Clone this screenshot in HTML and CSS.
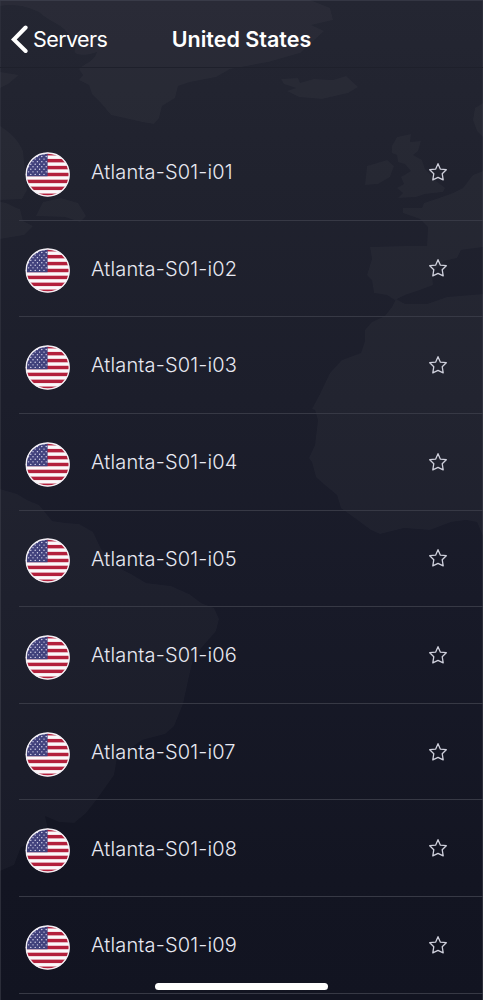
FILE: index.html
```html
<!DOCTYPE html>
<html lang="en">
<head>
<meta charset="utf-8">
<title>United States</title>
<link rel="stylesheet" href="styles.css">
</head>
<body>
<div class="screen">
  <svg class="map" viewBox="0 0 483 1000" aria-hidden="true">
    <!-- Greenland -->
    <path d="M0 6C18 3 29 8 39 12C47 20 56 22 64 29C73 39 77 42 75 49C72 55 83 57 97 52C94 62 83 64 79 69L83 75L79 80L89 85L92 94L101 103L111 115L129 119L142 122L154 124L159 118L162 106L175 98L178 86L190 82L216 77L230 69L268 62L300 53L324 31L311 25L333 20L330 8L320 4L310 0H0Z"/>
    <!-- Iceland -->
    <path d="M281 79L298 78L300 83L314 79L333 80L346 76L358 87L348 93L322 99L299 97L287 91L296 88L284 84Z"/>
    <!-- British Isles -->
    <path d="M365 185L367 166L377 163L387 160L394 166L390 177L378 184Z"/>
    <path d="M392 146L397 137L411 134L410 142L421 141L418 151L413 155L422 160L425 169L432 176L436 181L445 188L443 192L425 194L416 197L398 198L403 193L397 188L404 184L401 177L411 171L405 164L398 162L397 155L392 153Z"/>
    <!-- Europe -->
    <path d="M483 103L475 108L473 120L477 131L483 137Z"/>
    <path d="M483 171L473 175L463 188L453 193L439 198L424 203L422 208L403 208L403 213L420 219L428 227L427 246L404 246L370 247L372 259L367 275L372 280L374 293L387 295L395 300L405 295L420 290L433 285L432 273L444 261L457 258L461 250L483 247Z"/>
    <!-- Africa -->
    <path d="M396 299L405 304L427 304L447 297L483 294V536L477 522L466 520L451 522L430 530L404 528L380 534L371 530L348 513L341 508L337 495L325 485L316 477L312 462L309 458L315 445L318 420L315 410L312 409L320 394L330 373L342 360L361 353L365 341L365 330L372 322L385 316L392 307Z"/>
    <!-- North America -->
    <path d="M0 72L19 75L8 84L0 88Z"/>
    <path d="M0 126C10 133 17 138 23 151L27 190L22 199L0 200Z"/>
    <path d="M36 216L43 202L61 198L78 203L86 216L80 222L65 217Z"/>
    <path d="M0 202C8 202 12 207 20 209L23 221L33 226L24 235L0 239Z"/>
    <!-- South America -->
    <path d="M0 489L17 494L27 500L39 505L52 521L66 523L79 524L93 532L101 549L117 567L131 574L146 583L171 586L189 594L201 603L214 608L219 619L216 631L202 647L193 659L188 681L183 704L174 726L165 734L142 740L117 758L114 775L97 799L86 813L74 823L59 822L45 816L48 829L40 842L21 847L14 865L0 871Z"/>
  </svg>

  <header class="nav">
    <a class="back">
      <svg class="back-icon" viewBox="0 0 18 30" aria-hidden="true"><path d="M14.6 3.5L2.8 15.5L14.6 27"/></svg>
      <span>Servers</span>
    </a>
    <h1 class="title">United States</h1>
  </header>

  <ul class="list" id="servers"></ul>
  <div class="home-bar"></div>
</div>

<svg class="defs" aria-hidden="true">
  <defs>
    <clipPath id="disc"><circle cx="22.7" cy="22.5" r="21.8"/></clipPath>
    <symbol id="flag" viewBox="0 0 45 45">
      <g clip-path="url(#disc)" id="flag-art"></g>
      <circle cx="22.7" cy="22.5" r="21.5" fill="none" stroke="#f3f1f6" stroke-width="1.3"/>
    </symbol>
    <symbol id="star" viewBox="0 0 20 20">
      <path d="M10 1.7L12.4 7.2L18.3 7.7L14.2 11.7L15.2 17.9L10 15.3L4.8 17.9L5.8 11.7L1.7 7.7L7.6 7.2Z" fill="none" stroke="#cfd0dc" stroke-width="1.3" stroke-linejoin="round"/>
    </symbol>
  </defs>
</svg>
<script src="app.js"></script>
</body>
</html>
```
FILE: styles.css
```css
* {
  box-sizing: border-box;
}

body {
  margin: 0;
  background: #171926;
  font-family: Inter, "Liberation Sans", sans-serif;
  color: #fff;
}

.screen {
  position: relative;
  width: 483px;
  height: 1000px;
  overflow: hidden;
  background: linear-gradient(#242632 0%, #20222e 18%, #1c1e2b 40%, #181a28 60%, #131522 88%, #121421 100%);
  box-shadow: inset 0 1px 0 #343643, inset 1px 0 0 #2b2d39, inset -1px 0 0 #2b2d39;
}

.map {
  position: absolute;
  inset: 0;
  width: 483px;
  height: 1000px;
  fill: #fff;
  fill-opacity: 0.028;
}

.nav {
  position: relative;
  display: grid;
  grid-template-columns: 1fr auto 1fr;
  align-items: center;
  height: 68px;
  padding: 10px 11px 0;
  border-bottom: 1px solid #1e202b;
}

.back {
  display: flex;
  align-items: center;
  gap: 4px;
  font-size: 21.5px;
  letter-spacing: -0.6px;
}

.back-icon {
  width: 18px;
  height: 30px;
  fill: none;
  stroke: #fff;
  stroke-width: 4;
  stroke-linecap: round;
  stroke-linejoin: miter;
}

.title {
  margin: 0;
  font-size: 21.5px;
  font-weight: 600;
  letter-spacing: 0;
}

.list {
  position: relative;
  margin: 0;
  padding: 56px 0 0 19px;
  list-style: none;
}

.row {
  display: grid;
  grid-template-columns: 45px 1fr 20px;
  column-gap: 21px;
  align-items: center;
  height: 96.65px;
  padding: 0 35px 0 6px;
  border-bottom: 1px solid #373945;
}

.flag {
  width: 45px;
  height: 45px;
  margin-top: 5px;
}

.name {
  font-size: 20px;
  font-weight: 300;
  letter-spacing: 0.15px;
  line-height: 24px;
  margin-top: 0.5px;
  color: #e8e9f2;
}

.star {
  width: 20px;
  height: 20px;
}

.home-bar {
  position: absolute;
  left: 155px;
  bottom: 10px;
  width: 173px;
  height: 7px;
  border-radius: 4px;
  background: #fff;
}

.defs {
  position: absolute;
  width: 0;
  height: 0;
}
```
FILE: app.js
```js
// Flag artwork: 13 stripes, a canton and its staggered stars.
const stripe = 45 / 13;
let art = '<rect width="45" height="45" fill="#fbf8fa"/>';
for (let i = 0; i < 13; i += 2) {
  art += `<rect y="${i * stripe}" width="45" height="${stripe}" fill="#b3203c"/>`;
}
art += `<rect width="22.6" height="${stripe * 7}" fill="#41417c"/>`;
for (let r = 0; r < 9; r++) {
  for (let x = r % 2 ? 3.6 : 1.4; x < 21.5; x += 4.4) {
    art += `<circle cx="${x}" cy="${2 + r * 2.55}" r="0.7" fill="#dedcf0"/>`;
  }
}
document.getElementById("flag-art").innerHTML = art;

document.getElementById("servers").innerHTML = Array.from({ length: 9 }, (_, i) => `
  <li class="row">
    <svg class="flag"><use href="#flag"/></svg>
    <span class="name">Atlanta-S01-i0${i + 1}</span>
    <svg class="star"><use href="#star"/></svg>
  </li>`).join("");
```
